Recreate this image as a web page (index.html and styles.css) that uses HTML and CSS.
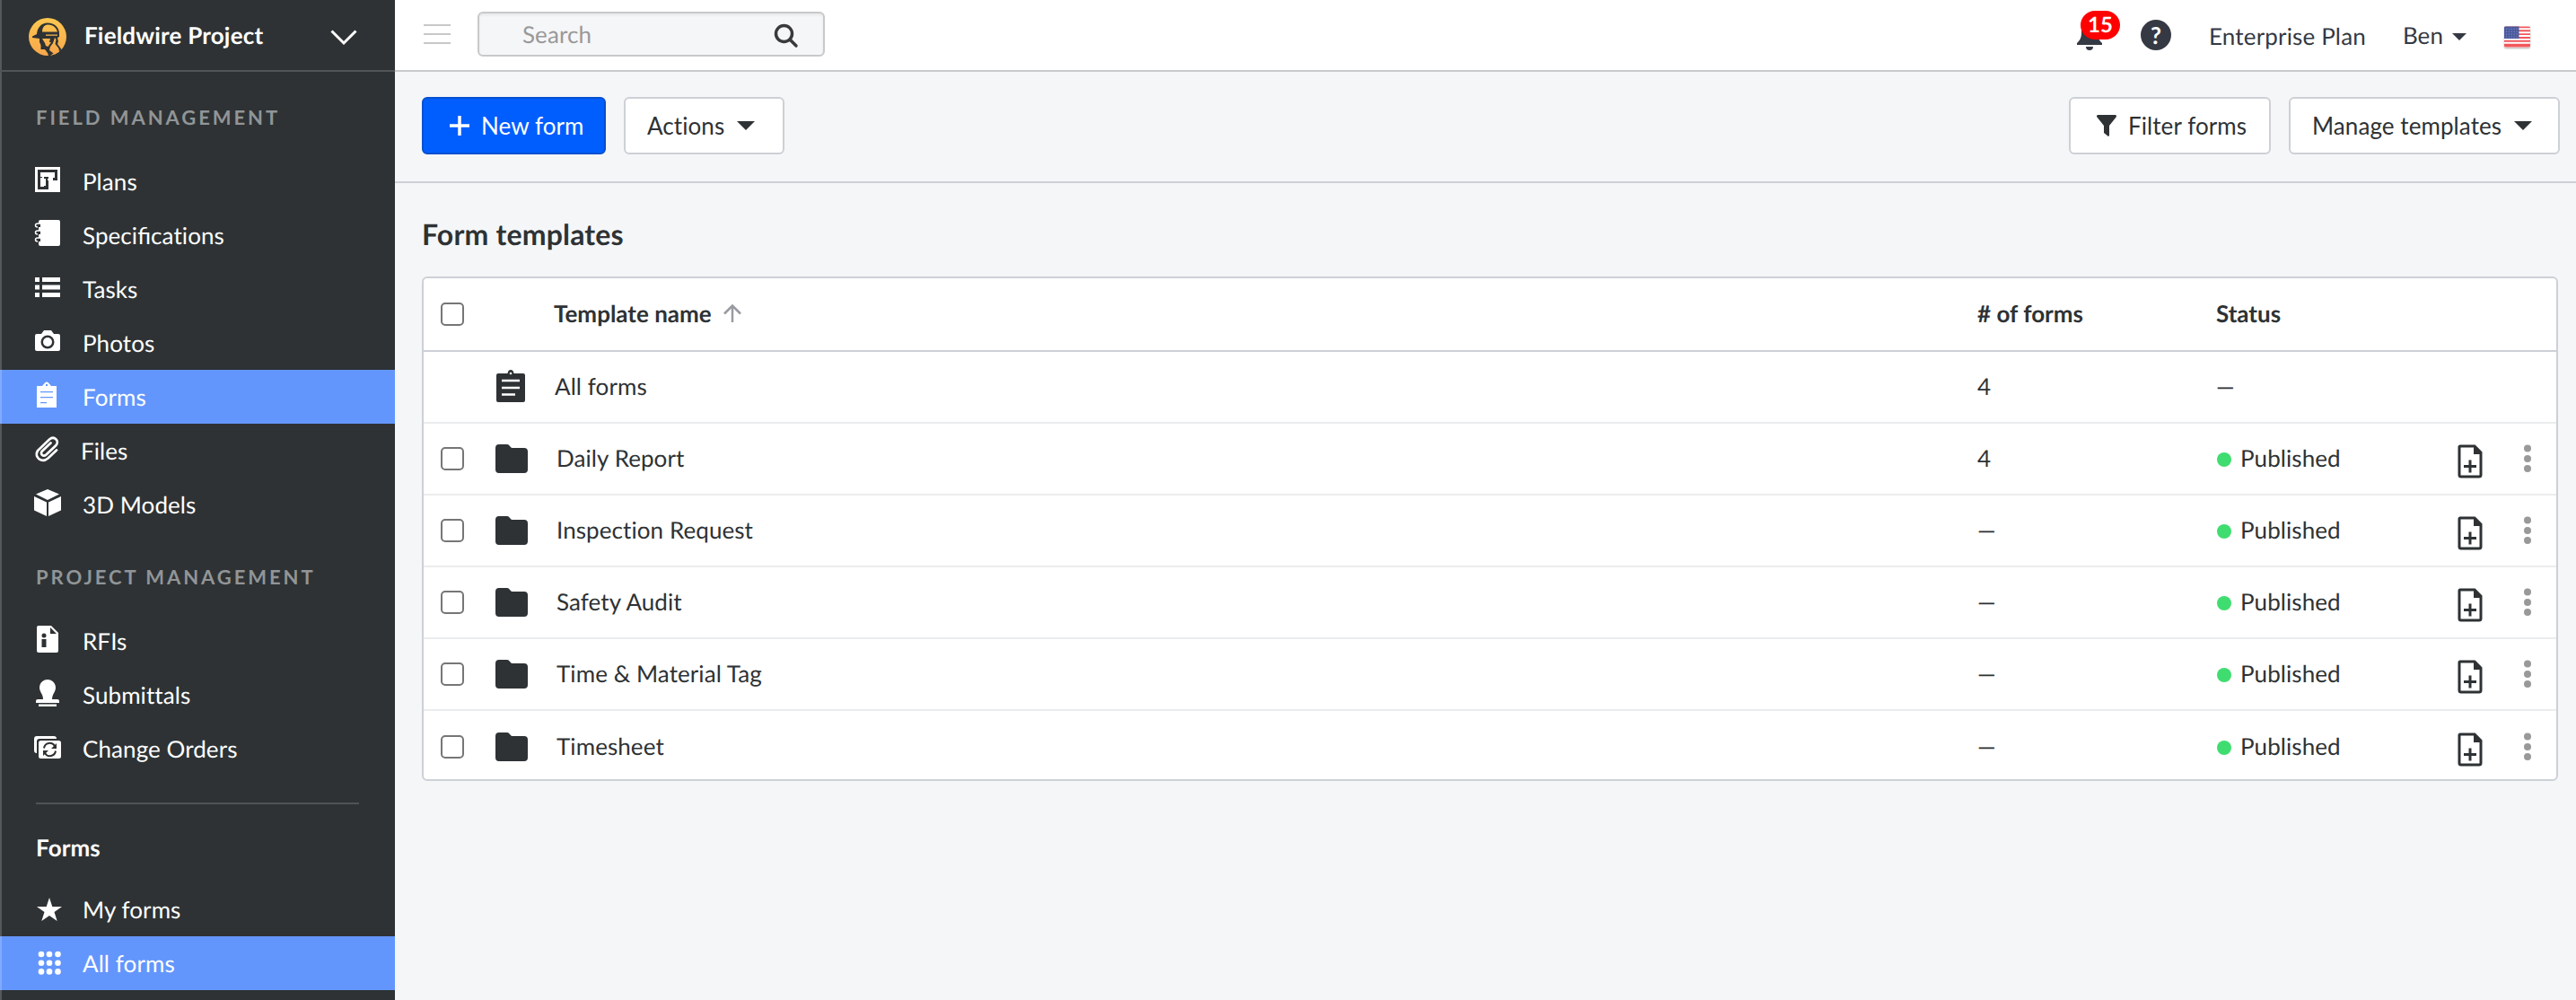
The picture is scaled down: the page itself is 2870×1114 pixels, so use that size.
FILE: index.html
```html
<!DOCTYPE html>
<html lang="en">

<head>
    <meta charset="utf-8">
    <meta name="viewport" content="width=device-width, initial-scale=1.0">
    <title>Fieldwire Project - Forms</title>
    <link rel="stylesheet" href="styles.css">
</head>

<body>
    <aside class="sidebar">
        <div class="project">
            <svg class="logo" viewBox="0 0 42 42">
                <defs>
                    <linearGradient id="gold" x1="0" y1="0" x2="0" y2="42" gradientUnits="userSpaceOnUse">
                        <stop offset="0" stop-color="#fdc750" />
                        <stop offset="1" stop-color="#f7a64b" />
                    </linearGradient>
                </defs>
                <circle cx="21" cy="21" r="21" fill="url(#gold)" />
                <path class="ink" d="M4 20.500L9 18C9.500 11 14 5.500 21 5.500C29 5.500 34 11 34 17V21L32 22L33 26L32 29L36.500 35L34.500 37L29 31L28 39L24 42H22L21 39L18 35H13.500V30L12 27V23L4 22Z" />
                <path fill="url(#gold)" d="M15 15.500C15 11 17 8 21 7.500C27 7 31 11 32 15.500ZM19 18.500H32V19.800H19ZM15 23H24L23 27L25 27L21.500 32L19 31L18 28ZM29 22L30.500 24L29.500 29L33.500 34V38L29 40.500L23 36L24 32L27 28Z" />
            </svg>
            <span class="project-name">Fieldwire Project</span>
            <svg class="chevron" viewBox="0 0 30 18"><path d="M1.500 1.500L15 15L28.500 1.500" /></svg>
        </div>

        <h3 class="group-title">FIELD MANAGEMENT</h3>
        <nav class="menu">
            <a class="item">
                <svg class="icon" viewBox="0 0 32 32"><path d="M2 2H30V30H2Z" /><path class="cut" d="M5 5H27V17H22V14H24V8H8V13H10V14H8V24H12V23H14V15H12V13H17V15H16V17H17V27H5Z" /></svg>
                <span>Plans</span>
            </a>
            <a class="item">
                <svg class="icon" viewBox="0 0 32 32"><path d="M8 1H28Q30 1 30 3V28Q30 30 28 30H8Q6 30 6 28V3Q6 1 8 1Z" /><path class="cut" d="M2 5H8V9H2ZM2 13H8V17H2ZM2 21H8V25H2Z" /><path class="ring" d="M8 5H5Q2.500 5 2.500 7T5 9M8 13H5Q2.500 13 2.500 15T5 17M8 21H5Q2.500 21 2.500 23T5 25" /></svg>
                <span>Speci<span class="liga">fi</span>cations</span>
            </a>
            <a class="item">
                <svg class="icon" viewBox="0 0 32 32"><path d="M2 5H7V10H2ZM10 5H30V10H10ZM2 13.500H7V18.500H2ZM10 13.500H30V18.500H10ZM2 22H7V27H2ZM10 22H30V27H10Z" /></svg>
                <span>Tasks</span>
            </a>
            <a class="item">
                <svg class="icon" viewBox="0 0 32 32"><path d="M12 4H20L23 8H28Q30 8 30 10V25Q30 27 28 27H4Q2 27 2 25V10Q2 8 4 8H9Z" /><circle class="cut" cx="16" cy="17" r="7.500" /><circle cx="16" cy="17" r="5" /></svg>
                <span>Photos</span>
            </a>
            <a class="item active">
                <svg class="icon" viewBox="0 0 32 32"><path d="M4 6H10L13 2.500Q15 .5 17 2.500L20 6H26V30H4Z" /><path class="cut" d="M8 12H22V13.300H8ZM8 18H22V19.300H8ZM8 24H15V25.300H8ZM14 4H16V6H14Z" /></svg>
                <span>Forms</span>
            </a>
            <a class="item files">
                <svg class="icon" viewBox="0 0 32 32"><path class="clip" d="M26 17.500L16.500 26.500C10 32 .5 26 5 18L18 5.500C23.500 1 29.500 7 25.500 12L14.500 22.500C11 25.500 7 21.500 10 18.500L19.500 9.500" /></svg>
                <span>Files</span>
            </a>
            <a class="item">
                <svg class="icon" viewBox="0 0 32 32"><path d="M16 1L29 6.500L16 13L3 6.500ZM1 9L15 15.500V31L1 24.500ZM31 9L17 15.500V31L31 24.500Z" /></svg>
                <span>3D Models</span>
            </a>
        </nav>

        <h3 class="group-title">PROJECT MANAGEMENT</h3>
        <nav class="menu">
            <a class="item">
                <svg class="icon" viewBox="0 0 32 32"><path d="M6 1H20L28 9V29Q28 31 26 31H6Q4 31 4 29V3Q4 1 6 1Z" /><path class="cut" d="M19 3V10H26ZM9.500 16H14.500V25H9.500Z" /><circle class="cut" cx="12" cy="12" r="2.500" /></svg>
                <span>RFIs</span>
            </a>
            <a class="item">
                <svg class="icon" viewBox="0 0 32 32"><path d="M16 1C21 1 25 5 25 10C25 15 21 17 21 23H27Q29 23 29 25V27H3V25Q3 23 5 23H11C11 17 7 15 7 10C7 5 11 1 16 1ZM6 28.500H26V31H6Z" /></svg>
                <span>Submittals</span>
            </a>
            <a class="item">
                <svg class="icon" viewBox="0 0 32 32"><path d="M4 4H23Q26 4 26 7H7Q4 7 4 10V23Q1 23 1 20V7Q1 4 4 4Z" /><rect x="6" y="9" width="25" height="20" rx="2.500" /><path class="turn" d="M12 17.500A6.500 6.500 0 0 1 24 15M25 20.500A6.500 6.500 0 0 1 13 23" /><path class="cut" d="M26 12V18H20ZM11 26V20H17Z" /></svg>
                <span>Change Orders</span>
            </a>
        </nav>

        <hr class="rule">

        <h3 class="forms-title">Forms</h3>
        <nav class="menu views">
            <a class="item">
                <svg class="icon" viewBox="0 0 32 32"><path d="M18 2L21.300 12H32L23.500 18L26.700 28L18 22L9.300 28L12.500 18L4 12H14.700Z" /></svg>
                <span>My forms</span>
            </a>
            <a class="item active">
                <svg class="icon" viewBox="0 0 32 32"><circle cx="9" cy="5" r="3.300" /><circle cx="18" cy="5" r="3.300" /><circle cx="27.500" cy="5" r="3.300" /><circle cx="9" cy="14.700" r="3.300" /><circle cx="18" cy="14.700" r="3.300" /><circle cx="27.500" cy="14.700" r="3.300" /><circle cx="9" cy="24.400" r="3.300" /><circle cx="18" cy="24.400" r="3.300" /><circle cx="27.500" cy="24.400" r="3.300" /></svg>
                <span>All forms</span>
            </a>
        </nav>
    </aside>

    <main class="main">
        <header class="topbar">
            <svg class="burger" viewBox="0 0 30 22"><path d="M0 1H30M0 11H30M0 21H30" /></svg>
            <div class="search">
                <span>Search</span>
                <svg viewBox="0 0 28 28"><circle cx="11.500" cy="11.500" r="9" /><path d="M18 18L25 25" /></svg>
            </div>
            <div class="account">
                <div class="bell">
                    <svg viewBox="0 0 28 34"><path d="M14 2C21 2 23 8 23 14C23 21 25 23 28 26V28H0V26C3 23 5 21 5 14C5 8 7 2 14 2ZM10 30H18Q18 34 14 34T10 30Z" /></svg>
                    <span class="badge">15</span>
                </div>
                <span class="help">?</span>
                <span class="plan">Enterprise Plan</span>
                <span class="user">Ben</span>
                <svg class="small-caret" viewBox="0 0 16 8"><path d="M0 0H16L8 8Z" /></svg>
                <svg class="flag" viewBox="0 0 30 24"><path fill="#fff" d="M0 0H30V24H0Z" /><path fill="#f0575c" d="M0 0H30V2H0ZM0 4H30V6H0ZM0 8H30V10H0ZM0 12H30V14H0ZM0 16H30V18H0ZM0 20H30V24H0Z" /><path fill="#4a5a9f" d="M0 0H17V14H0Z" /><path class="stars" d="M2 3H16M2 6H16M2 9H16M2 12H16" /></svg>
            </div>
        </header>

        <div class="toolbar">
            <button class="btn primary"><svg class="plus" viewBox="0 0 22 22"><path d="M11 0V22M0 11H22" /></svg>New form</button>
            <button class="btn actions">Actions<svg class="caret" viewBox="0 0 20 10"><path d="M0 0H20L10 10Z" /></svg></button>
            <button class="btn filter"><svg class="funnel" viewBox="0 0 22 24"><path d="M1 0H21Q22 0 22 2L14 12V23L13 24L8 20V12L0 2Q0 0 1 0Z" /></svg>Filter forms</button>
            <button class="btn manage">Manage templates<svg class="caret" viewBox="0 0 20 10"><path d="M0 0H20L10 10Z" /></svg></button>
        </div>

        <h1 class="title">Form templates</h1>

        <section class="table">
            <div class="row head">
                <i class="check"></i>
                <span></span>
                <span class="name">Template name<svg class="arrow" viewBox="0 0 20 20"><path d="M10 20V2M1 10.500L10 1.500L19 10.500" /></svg></span>
                <span># of forms</span>
                <span>Status</span>
            </div>
            <div class="row all">
                <span></span>
                <svg class="board" viewBox="0 0 32 36"><path d="M2 4H12.500Q13 0 16 0T19.500 4H30Q32 4 32 6V34Q32 36 30 36H2Q0 36 0 34V6Q0 4 2 4Z" /><path class="lines" d="M6 12H26M6 20H26M6 27.500H21" /><circle cx="16" cy="4" r="1.300" fill="#fff" /></svg>
                <span class="name">All forms</span>
                <span>4</span>
                <span>—</span>
            </div>
        </section>
    </main>

    <template>
        <div class="row">
            <i class="check"></i>
            <svg class="folder" viewBox="0 0 36 32"><path d="M4 0H13Q15 0 16 2L18 4H32Q36 4 36 8V28Q36 32 32 32H4Q0 32 0 28V4Q0 0 4 0Z" /></svg>
            <span class="name"></span>
            <span class="count"></span>
            <span class="status"><i class="dot"></i>Published</span>
            <svg class="add" viewBox="0 0 28 38"><path class="page" d="M3 2H19L26 9V34Q26 36 24 36H4Q2 36 2 34V3Q2 2 3 2Z" /><path d="M18 1L27 10V11H18Z" /><path class="page" d="M14 17.500V31.500M7 24.500H21" /></svg>
            <svg class="more" viewBox="0 0 8 32"><circle cx="4" cy="4.500" r="4" /><circle cx="4" cy="16" r="4" /><circle cx="4" cy="27" r="4" /></svg>
        </div>
    </template>

    <script>
        const templates = [
            ["Daily Report", "4"],
            ["Inspection Request", "—"],
            ["Safety Audit", "—"],
            ["Time & Material Tag", "—"],
            ["Timesheet", "—"]
        ];
        const pointer = document.querySelector("template");
        const list = document.querySelector(".table");

        templates.forEach(form => {
            const klon = pointer.content.cloneNode(true);
            klon.querySelector(".name").textContent = form[0];
            klon.querySelector(".count").textContent = form[1];
            list.appendChild(klon);
        })
    </script>
</body>

</html>
```

FILE: styles.css
```css
* {
    box-sizing: border-box;
}

body {
    margin: 0;
    display: flex;
    height: 1114px;
    overflow: hidden;
    background: #f5f6f8;
    color: #2e3234;
    font-family: Lato, sans-serif;
    font-size: 26px;
    line-height: 32px;
    letter-spacing: .08px;
    text-rendering: geometricPrecision;
}

h1,
h3 {
    margin: 0;
}

svg {
    display: block;
    flex: none;
    fill: currentColor;
}

/* sidebar */
.sidebar {
    width: 440px;
    flex: none;
    background: #2e3234;
    color: #fff;
    box-shadow: inset 2px 0 #54585a;
}

.project {
    display: flex;
    align-items: center;
    height: 80px;
    padding: 0 42px 0 32px;
    border-bottom: 2px solid #505456;
}

.logo {
    width: 42px;
    height: 42px;
    margin-top: 3px;
}

.ink {
    fill: #2e3234;
}

.project-name {
    margin-left: 20px;
    font-weight: bold;
    letter-spacing: .18px;
}

.chevron {
    width: 30px;
    height: 18px;
    margin: 6px 0 0 auto;
    fill: none;
    stroke: #fff;
    stroke-width: 3;
}

.group-title {
    height: 92px;
    padding: 35px 0 0 40px;
    color: #919597;
    font-size: 22px;
    letter-spacing: 2.930px;
}

.item {
    display: flex;
    align-items: center;
    height: 60px;
    padding-left: 37px;
    gap: 23px;
}

.item.active {
    background: #6396fd;
    box-shadow: inset 2px 0 #81aafd;
}

.item.files {
    gap: 21px;
}

.liga {
    letter-spacing: normal;
}

.icon {
    width: 32px;
    height: 32px;
    margin-top: -4px;
    overflow: visible;
}

.views .icon {
    margin-top: 1px;
}

.cut {
    fill: #2e3234;
}

.active .cut {
    fill: #6396fd;
}

.ring {
    fill: none;
    stroke: #fff;
    stroke-width: 1.500;
}

.clip {
    fill: none;
    stroke: #fff;
    stroke-width: 2.700;
    stroke-linecap: round;
}

.turn {
    fill: none;
    stroke: #2e3234;
    stroke-width: 2;
}

.rule {
    height: 2px;
    margin: 30px 40px 0;
    border: 0;
    background: #505456;
}

.forms-title {
    height: 87px;
    padding: 32px 0 0 40px;
    font-size: 26px;
}

/* top bar */
.main {
    flex: 1;
}

.topbar {
    display: flex;
    align-items: center;
    height: 80px;
    padding: 0 51px 0 32px;
    background: #fff;
    border-bottom: 2px solid #c9cacc;
}

.burger {
    width: 30px;
    height: 22px;
    margin-top: -2px;
    stroke: #c8c8c8;
    stroke-width: 2;
}

.search {
    display: flex;
    align-items: center;
    justify-content: space-between;
    width: 387px;
    height: 50px;
    margin: -2px 0 0 30px;
    padding: 0 27px 0 48px;
    background: #f5f6f8;
    border: 2px solid #c9c9c9;
    border-radius: 6px;
    box-shadow: inset 0 2px 3px rgba(0, 0, 0, .06);
    color: #999;
}

.search svg {
    width: 28px;
    height: 28px;
    margin-top: 4px;
    fill: none;
    stroke: #3a3a3a;
    stroke-width: 3.500;
    stroke-linecap: round;
}

.account {
    display: flex;
    align-items: center;
    margin-left: auto;
    color: #353943;
}

.bell {
    position: relative;
    margin-right: 43px;
}

.bell svg {
    width: 28px;
    height: 34px;
}

.badge {
    position: absolute;
    left: 4px;
    top: -10px;
    width: 44px;
    height: 32px;
    border-radius: 16px;
    background: #f00;
    color: #fff;
    font-size: 24px;
    font-weight: bold;
    text-align: center;
}

.help {
    width: 34px;
    height: 34px;
    border-radius: 50%;
    background: #353943;
    color: #fff;
    font-size: 26px;
    font-weight: bold;
    line-height: 34px;
    text-align: center;
}

.plan {
    margin: 2px 41px 0 42px;
    letter-spacing: .16px;
}

.small-caret {
    width: 16px;
    height: 8px;
    margin: 3px 42px 0 10px;
}

.flag {
    width: 29px;
    height: 24px;
    margin-top: 3px;
    border-radius: 2px;
    box-shadow: 0 1px 2px rgba(0, 0, 0, .3);
}

.stars {
    stroke: #98a1ca;
    stroke-width: 1;
    stroke-dasharray: 1 2;
}

/* buttons */
.toolbar {
    display: flex;
    height: 124px;
    padding: 28px 18px 0 30px;
    border-bottom: 2px solid #cdd0d6;
}

.btn {
    display: flex;
    align-items: center;
    height: 64px;
    padding: 0 0 0 24px;
    border: 2px solid #cdd0d6;
    border-radius: 6px;
    background: #fff;
    color: #2e3234;
    font-family: inherit;
    font-size: 26px;
    letter-spacing: .08px;
    white-space: nowrap;
}

.primary {
    width: 205px;
    padding-left: 29px;
    background: #005eff;
    border-color: #0650d0;
    color: #fff;
}

.plus {
    width: 22px;
    height: 22px;
    margin-right: 13px;
    stroke: #fff;
    stroke-width: 3.500;
}

.actions {
    width: 179px;
    margin-left: 20px;
}

.caret {
    width: 20px;
    height: 10px;
    margin-left: 14px;
}

.filter {
    width: 225px;
    margin-left: auto;
    padding-left: 29px;
}

.funnel {
    width: 22px;
    height: 24px;
    margin-right: 13px;
}

.manage {
    width: 302px;
    margin-left: 20px;
}

/* template list */
.title {
    padding: 37px 0 0 30px;
    height: 104px;
    font-size: 32px;
    line-height: 40px;
    letter-spacing: .18px;
}

.table {
    width: 2380px;
    height: 562px;
    margin-left: 30px;
    border: 2px solid #cdd0d6;
    border-radius: 6px;
    background: #fff;
    overflow: hidden;
}

.row {
    display: grid;
    grid-template-columns: 60px 66px 1586px 266px 269px 74px 1fr;
    align-items: center;
    height: 80px;
    padding-left: 19px;
    border-bottom: 2px solid #ebecee;
}

.row:last-child {
    border: 0;
}

.row span {
    padding-bottom: 2px;
}

.head {
    height: 82px;
    border-color: #cdd0d6;
    font-weight: bold;
    letter-spacing: 0;
}

.name {
    padding-left: 3px;
}

.all .name {
    padding-left: 1px;
}

.head .name {
    display: flex;
    align-items: center;
    padding-left: 0;
}

.arrow {
    width: 20px;
    height: 20px;
    margin-left: 13px;
    fill: none;
    stroke: #999ba1;
    stroke-width: 2.500;
}

.check {
    width: 26px;
    height: 26px;
    border: 2px solid #767676;
    border-radius: 5px;
}

.board {
    width: 32px;
    height: 36px;
    margin: -3px 0 0 2px;
}

.lines {
    stroke: #fff;
    stroke-width: 2.500;
}

.folder {
    width: 36px;
    height: 32px;
    margin-left: 1px;
}

.status {
    display: flex;
    align-items: center;
}

.dot {
    width: 16px;
    height: 16px;
    margin: 4px 10px 0 1px;
    border-radius: 50%;
    background: #3fdd70;
}

.add {
    width: 28px;
    height: 38px;
    margin-top: 6px;
}

.page {
    fill: none;
    stroke: #2e3234;
    stroke-width: 3;
}

.more {
    width: 8px;
    height: 32px;
    color: #999;
}
```
